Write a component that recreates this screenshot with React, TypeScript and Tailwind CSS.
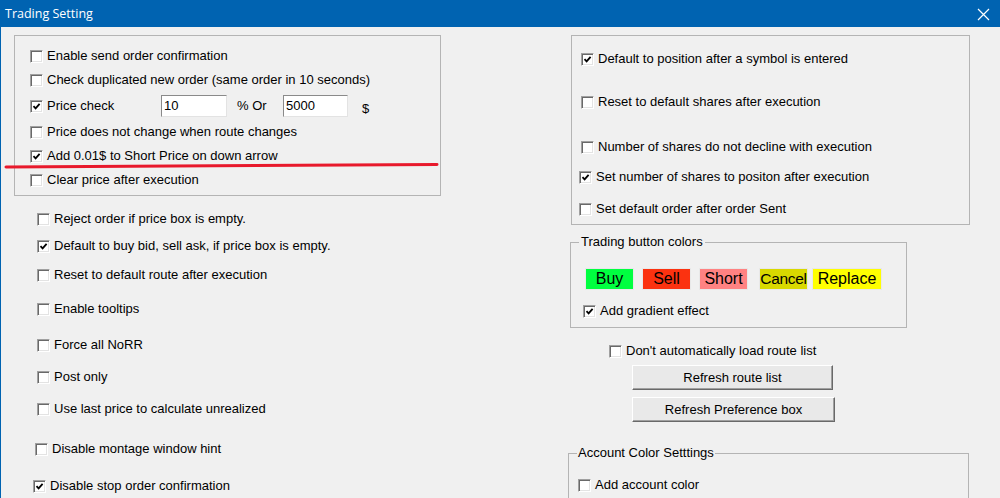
import React from 'react';

const font = { fontFamily: '"Liberation Sans", Arial, sans-serif' };

const Check: React.FC<{ checked?: boolean }> = ({ checked }) => (
  <span className="flex h-[13px] w-[13px] shrink-0 items-center justify-center border border-t-[#a0a0a0] border-l-[#a0a0a0] border-r-white border-b-white bg-white shadow-[inset_1px_1px_0_#696969,inset_-1px_-1px_0_#e3e3e3]">
    {checked && (
      <svg width="9" height="9" viewBox="0 0 9 9">
        <path d="M1.5 4.2 L3.6 6.4 L7.6 1.8" fill="none" stroke="#000" strokeWidth="1.8" />
      </svg>
    )}
  </span>
);

const Row: React.FC<{ label: string; checked?: boolean; className?: string }> = ({ label, checked, className }) => (
  <div className={`flex h-[24px] items-center gap-[4px] ${className ?? ''}`}>
    <Check checked={checked} />
    <span className="whitespace-nowrap">{label}</span>
  </div>
);

const Field: React.FC<{ value: string; className?: string }> = ({ value, className }) => (
  <div className={`flex h-[22px] items-center border border-t-[#8a8a8a] border-l-[#8a8a8a] border-r-[#e3e3e3] border-b-[#e3e3e3] bg-white pl-[2px] ${className ?? ''}`}>
    {value}
  </div>
);

const ColorBtn: React.FC<{ label: string; bg: string; w: string; ml: string; tight?: boolean }> = ({ label, bg, w, ml, tight }) => (
  <div className={`h-[22px] overflow-hidden whitespace-nowrap border border-[#e8e8e8] text-center leading-[20px] text-black ${tight ? 'text-[15.5px] tracking-[-0.3px]' : 'text-[16px]'} ${bg} ${w} ${ml}`}>
    {label}
  </div>
);

const WinButton: React.FC<{ label: string; w: string; mt: string }> = ({ label, w, mt }) => (
  <div className={`flex h-[25px] items-center justify-center border border-t-white border-l-white border-r-[#696969] border-b-[#696969] bg-[#e9e9e9] shadow-[inset_-1px_-1px_0_#a0a0a0] ${w} ${mt}`}>
    {label}
  </div>
);

export default function App() {
  return (
    <div className="relative flex h-[498px] w-[1000px] flex-col overflow-hidden bg-[#f0f0f0] text-[13px] text-black" style={font}>
      <div className="flex h-[27px] shrink-0 items-center justify-between bg-[#0063b1] pl-[5px] pr-[10px] pt-[2px] text-white">
        <span className="text-[12.5px]" style={{ fontFamily: '"Open Sans", "Noto Sans", sans-serif' }}>Trading Setting</span>
        <svg width="13" height="13" viewBox="0 0 13 13">
          <path d="M1 1 L12 12 M12 1 L1 12" stroke="#fff" strokeWidth="1.2" />
        </svg>
      </div>

      <div className="flex flex-1 border-l border-[#0063b1]">
        {/* left column */}
        <div className="w-[557px] shrink-0 pl-[13px] pt-[8px]">
          <div className="h-[161px] w-[427px] border border-[#b4b4b4] pl-[15px] pt-[8px]">
            <Row label="Enable send order confirmation" />
            <Row label="Check duplicated new order (same order in 10 seconds)" />
            <div className="flex h-[28px] items-center">
              <Row label="Price check" checked className="w-[131px]" />
              <Field value="10" className="w-[66px]" />
              <span className="ml-[10px] w-[46px]">% Or</span>
              <Field value="5000" className="w-[65px]" />
              <span className="ml-[14px] mt-[5px]">$</span>
            </div>
            <Row label="Price does not change when route changes" />
            <Row label="Add 0.01$ to Short Price on down arrow" checked className="h-[23px]" />
            <Row label="Clear price after execution" />
          </div>

          <div className="pl-[23px]">
            <Row label="Reject order if price box is empty." className="mt-[11px]" />
            <Row label="Default to buy bid, sell ask, if price box is empty." checked className="mt-[3px]" />
            <Row label="Reset to default route after execution" className="mt-[5px]" />
            <Row label="Enable tooltips" className="mt-[10px]" />
            <Row label="Force all NoRR" className="mt-[12px]" />
            <Row label="Post only" className="mt-[8px]" />
            <Row label="Use last price to calculate unrealized" className="mt-[8px]" />
            <Row label="Disable montage window hint" className="-ml-[2px] mt-[16px]" />
            <Row label="Disable stop order confirmation" checked className="-ml-[4px] mt-[13px]" />
          </div>
        </div>

        {/* right column */}
        <div className="flex-1 pt-[8px]">
          <div className="ml-[13px] h-[190px] w-[399px] border border-[#b4b4b4] pl-[9px] pt-[11px]">
            <Row label="Default to position after a symbol is entered" checked />
            <Row label="Reset to default shares after execution" className="mt-[19px]" />
            <Row label="Number of shares do not decline with execution" className="mt-[21px]" />
            <Row label="Set number of shares to positon after execution" checked className="-ml-[2px] mt-[6px]" />
            <Row label="Set default order after order Sent" className="-ml-[2px] mt-[8px]" />
          </div>

          <fieldset className="ml-[12px] mt-[9px] h-[94px] w-[337px] border border-[#b4b4b4] pl-[8px]">
            <legend className="px-[2px] leading-[16px]">Trading button colors</legend>
            <div className="ml-[6px] mt-[18px] flex">
              <ColorBtn label="Buy" bg="bg-[#00ff40]" w="w-[49px]" ml="ml-0" />
              <ColorBtn label="Sell" bg="bg-[#fb3210]" w="w-[49px]" ml="ml-[8px]" />
              <ColorBtn label="Short" bg="bg-[#ff8282]" w="w-[49px]" ml="ml-[8px]" />
              <ColorBtn label="Cancel" bg="bg-[#d9d900]" w="w-[49px]" ml="ml-[11px]" tight />
              <ColorBtn label="Replace" bg="bg-[#ffff00]" w="w-[70px]" ml="ml-[4px]" />
            </div>
            <Row label="Add gradient effect" checked className="ml-[4px] mt-[9px]" />
          </fieldset>

          <div className="ml-[51px] mt-[11px]">
            <Row label="Don't automatically load route list" />
            <div className="ml-[23px]">
              <WinButton label="Refresh route list" w="w-[201px]" mt="mt-[2px]" />
              <WinButton label="Refresh Preference box" w="w-[203px]" mt="mt-[7px]" />
            </div>
          </div>

          <fieldset className="ml-[10px] mt-[23px] h-[80px] w-[401px] border border-[#b4b4b4] pl-[8px]">
            <legend className="px-[1px] leading-[16px]">Account Color Setttings</legend>
            <Row label="Add account color" className="ml-[1px] mt-[12px]" />
          </fieldset>
        </div>
      </div>

      <svg className="pointer-events-none absolute left-0 top-0" width="1000" height="498">
        <path d="M6 167 Q 220 166 437 164.5" fill="none" stroke="#e8192c" strokeWidth="3" strokeLinecap="round" />
      </svg>
    </div>
  );
}
